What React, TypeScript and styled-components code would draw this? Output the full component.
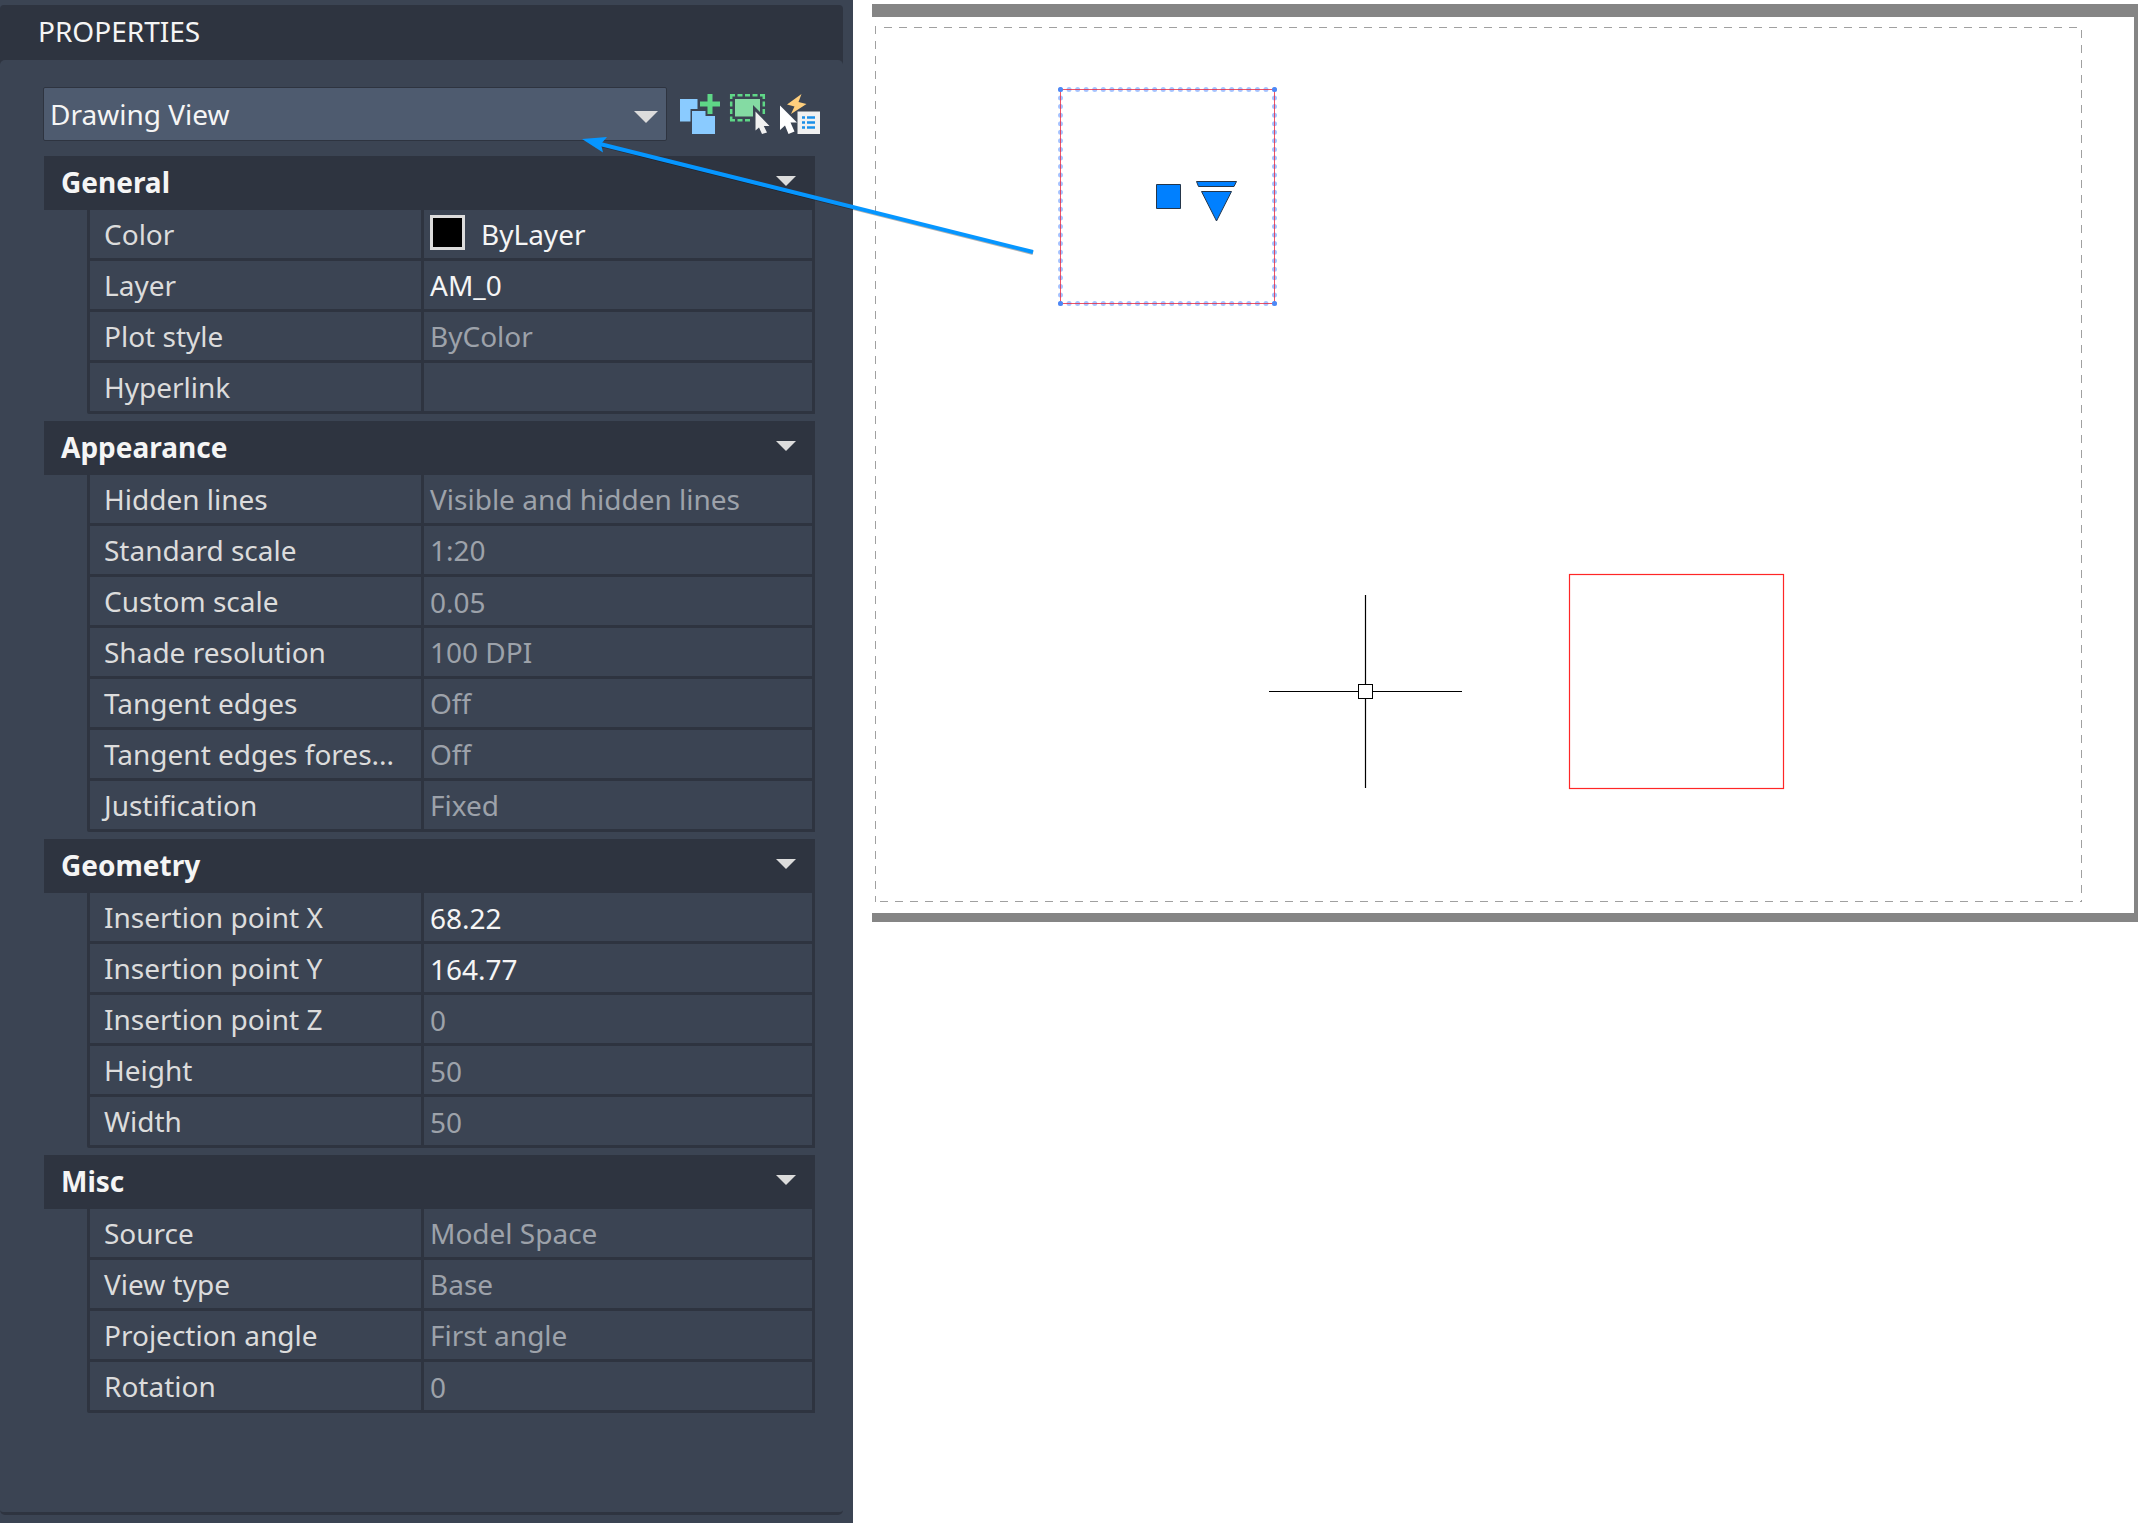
import React, { useId, useState } from "react";
import styled, { createGlobalStyle } from "styled-components";

const color = {
  panel: "#3b4453",
  dark: "#2e3440",
  field: "#4e5b6f",
  label: "#dcdcdc",
  text: "#f5f5f5",
  muted: "#9da2aa",
  accent: "#0696ff",
};

const GlobalStyle = createGlobalStyle`
  *, *::before, *::after { box-sizing: border-box; }
  body {
    margin: 0;
    background: #ffffff;
    font-family: "Noto Sans", "Open Sans", sans-serif;
    font-size: 28px;
    line-height: 38px;
  }
  button, input, select { font: inherit; color: inherit; }
`;

const Workspace = styled.div`
  position: relative;
  display: grid;
  grid-template-columns: 853px minmax(0, 1fr);
  min-height: 100vh;
`;

const Palette = styled.aside`
  display: flex;
  flex-direction: column;
  padding: 5px 10px 8px 0;
  background: ${color.panel};
  color: ${color.label};
`;

const TitleBar = styled.header`
  padding: 7px 38px 14px;
  margin-bottom: -4px;
  border-radius: 4px 4px 0 0;
  background: ${color.dark};
  color: ${color.text};
`;

const Title = styled.h1`
  margin: 0;
  font-size: 28px;
  line-height: 38px;
  font-weight: 400;
`;

const PaletteBody = styled.div`
  flex: 1;
  padding: 27px 23px 0 43px;
  border-bottom: 3px solid ${color.dark};
  border-radius: 5px;
  background: ${color.panel};
`;

const Toolbar = styled.div`
  display: flex;
  align-items: center;
  gap: 10px;
  margin-bottom: 15px;
`;

const SelectBox = styled.div`
  position: relative;
  flex: 1;
  margin-right: 3px;
`;

const ObjectSelect = styled.select`
  display: block;
  width: 100%;
  height: 54px;
  padding: 0 40px 0 6px;
  appearance: none;
  border: 1px solid ${color.dark};
  border-radius: 2px;
  background: ${color.field};
  color: ${color.text};
`;

const SelectArrow = styled.svg`
  position: absolute;
  top: 24px;
  right: 9px;
  pointer-events: none;
`;

const ToolButton = styled.button`
  display: block;
  width: 40px;
  height: 40px;
  padding: 0;
  border: 0;
  background: none;
  svg { display: block; overflow: visible; }
`;

const Groups = styled.div`
  display: flex;
  flex-direction: column;
  gap: 7px;
  margin: 0 5px 0 1px;
`;

const GroupHeading = styled.h2`
  margin: 0;
  font-size: 28px;
  line-height: 38px;
`;

const GroupToggle = styled.button`
  display: flex;
  align-items: center;
  justify-content: space-between;
  width: 100%;
  height: 54px;
  padding: 0 19px 2px 17px;
  border: 0;
  background: ${color.dark};
  color: ${color.text};
  font-weight: 700;
  text-align: left;
`;

const GroupArrow = styled.svg`
  margin-bottom: 2px;
`;

const PropertyTable = styled.table`
  width: calc(100% - 43px);
  margin-left: 43px;
  table-layout: fixed;
  border-collapse: separate;
  border-spacing: 0;
  border-left: 3px solid ${color.dark};
  border-radius: 0 0 2px 2px;
`;

const NameCell = styled.th`
  width: 334px;
  height: 51px;
  padding: 0 0 1px 14px;
  border-right: 3px solid ${color.dark};
  border-bottom: 3px solid ${color.dark};
  font-weight: 400;
  text-align: left;
  white-space: nowrap;
`;

const ValueCell = styled.td<{ $editable?: boolean; $numeric?: boolean }>`
  height: 51px;
  padding: ${(p) => (p.$numeric ? "2px 6px 0" : "0 6px 1px")};
  border-right: 3px solid ${color.dark};
  border-bottom: 3px solid ${color.dark};
  color: ${(p) => (p.$editable ? color.text : color.muted)};
  white-space: nowrap;
`;

const ValueInput = styled.input`
  display: block;
  width: 100%;
  height: 38px;
  padding: 0;
  border: 0;
  outline: 0;
  background: none;
`;

const ColorValue = styled.span`
  display: flex;
  align-items: center;
  gap: 16px;
`;

const Swatch = styled.span`
  width: 35px;
  height: 35px;
  margin-bottom: 2px;
  border: 3px solid ${color.label};
  background: #000000;
`;

const Canvas = styled.main`
  padding: 4px 0 0 19px;
`;

const Sheet = styled.div`
  overflow: hidden;
  border: solid #858585;
  border-width: 13px 4px 9px 0;
  background: #ffffff;
  svg { display: block; }
`;

const Callout = styled.svg`
  position: absolute;
  top: 126px;
  left: 572px;
  pointer-events: none;
`;

type Property = { name: string; value: string; kind?: "color" | "choice" | "number"; numeric?: boolean };
type Group = { title: string; properties: Property[] };

const groups: Group[] = [
  {
    title: "General",
    properties: [
      { name: "Color", value: "ByLayer", kind: "color" },
      { name: "Layer", value: "AM_0", kind: "choice" },
      { name: "Plot style", value: "ByColor" },
      { name: "Hyperlink", value: "" },
    ],
  },
  {
    title: "Appearance",
    properties: [
      { name: "Hidden lines", value: "Visible and hidden lines" },
      { name: "Standard scale", value: "1:20" },
      { name: "Custom scale", value: "0.05", numeric: true },
      { name: "Shade resolution", value: "100 DPI" },
      { name: "Tangent edges", value: "Off" },
      { name: "Tangent edges fores...", value: "Off" },
      { name: "Justification", value: "Fixed" },
    ],
  },
  {
    title: "Geometry",
    properties: [
      { name: "Insertion point X", value: "68.22", kind: "number", numeric: true },
      { name: "Insertion point Y", value: "164.77", kind: "number", numeric: true },
      { name: "Insertion point Z", value: "0", numeric: true },
      { name: "Height", value: "50", numeric: true },
      { name: "Width", value: "50", numeric: true },
    ],
  },
  {
    title: "Misc",
    properties: [
      { name: "Source", value: "Model Space" },
      { name: "View type", value: "Base" },
      { name: "Projection angle", value: "First angle" },
      { name: "Rotation", value: "0", numeric: true },
    ],
  },
];

function PickAddIcon() {
  return (
    <svg width="40" height="40" viewBox="0 0 40 40" aria-hidden="true">
      <path d="M0 5H17.5V15H10.5V27.5H0Z" fill="#8acbff" />
      <path d="M12 17H25.5V22H35V40H12Z" fill="#8acbff" />
      <path d="M27.5 0H32.5V7.5H40V12.5H32.5V20H27.5V12.5H20V7.5H27.5Z" fill="#5fd787" />
    </svg>
  );
}

function SelectObjectsIcon() {
  return (
    <svg width="40" height="40" viewBox="0 0 40 40" aria-hidden="true">
      <path d="M5 5H30V22.5H5Z" fill="#84dba3" />
      <path
        d="M1.2 5V1.2H5M7.5 1.2H12.5M15 1.2H20M22.5 1.2H27.5M30 1.2H33.8V5M33.8 7.5V12.5M33.8 15V20M1.2 7.5V12.5M1.2 15V20M1.2 22.5V26.3H5M7.5 26.3H12.5M15 26.3H20"
        fill="none"
        stroke="#5fd787"
        strokeWidth="2.5"
      />
      <path d="M23 11L35 23L25.5 34H23Z" fill={color.panel} />
      <path d="M25.5 17.5L39.5 32H33.8L37 38.5L32 40L29 33.5L25.5 36.5Z" fill="#f0f0f0" />
    </svg>
  );
}

function QuickSelectIcon() {
  return (
    <svg width="40" height="40" viewBox="0 0 40 40" aria-hidden="true">
      <path d="M21.5 0L7 10.5L14.5 12.5L11 20L26.5 10L18.5 8Z" fill="#ffcf7d" />
      <path d="M0 11.5L17 28.5H10.5L14.5 37.5L8.5 40L5 31.5L0 36Z" fill="#ffffff" />
      <path d="M17.5 17.5H40V40H17.5Z" fill="#f0f0f0" />
      <path
        d="M22 23.5H25M27 23.5H35M22 28.5H25M27 28.5H35M22 33.5H25M27 33.5H35"
        stroke="#1a8fe8"
        strokeWidth="2.6"
      />
    </svg>
  );
}

function PropertyRow({ name, value, kind, numeric }: Property) {
  const id = useId();
  const [current, setCurrent] = useState(value);
  return (
    <tr>
      <NameCell scope="row">{kind === "number" ? <label htmlFor={id}>{name}</label> : name}</NameCell>
      <ValueCell $editable={Boolean(kind)} $numeric={numeric}>
        {kind === "number" ? (
          <ValueInput id={id} type="text" value={current} onChange={(e) => setCurrent(e.target.value)} />
        ) : kind === "color" ? (
          <ColorValue>
            <Swatch />
            {value}
          </ColorValue>
        ) : (
          value
        )}
      </ValueCell>
    </tr>
  );
}

function PropertyGroup({ title, properties }: Group) {
  const [open, setOpen] = useState(true);
  return (
    <section>
      <GroupHeading>
        <GroupToggle type="button" aria-expanded={open} onClick={() => setOpen(!open)}>
          {title}
          <GroupArrow width="20" height="10" viewBox="0 0 20 10" aria-hidden="true">
            <path d="M0 0H20L10 10Z" fill="#dcdcdc" />
          </GroupArrow>
        </GroupToggle>
      </GroupHeading>
      {open && (
        <PropertyTable aria-label={title}>
          <tbody>
            {properties.map((p) => (
              <PropertyRow key={p.name} {...p} />
            ))}
          </tbody>
        </PropertyTable>
      )}
    </section>
  );
}

function SheetDrawing() {
  return (
    <svg width="1262" height="896" viewBox="872 17 1262 896" aria-label="Layout sheet">
      <g fill="none" stroke="#a0a0a0" strokeWidth="1" strokeDasharray="8 7">
        <path d="M884 27.5H2078M880 901.5H2082" />
        <path d="M875.5 26V902M2081.5 30V902" />
      </g>
      <g fill="none">
        <rect
          x="1060.5"
          y="89.5"
          width="214"
          height="214"
          stroke="#5f94ff"
          strokeOpacity="0.55"
          strokeWidth="5"
          strokeLinecap="round"
          strokeDasharray="0 8.56"
        />
        <rect x="1060.5" y="89.5" width="214" height="214" stroke="#e8283f" strokeOpacity="0.8" strokeWidth="1" />
      </g>
      <g fill="#4d88f5">
        <circle cx="1060.5" cy="89.5" r="2.5" />
        <circle cx="1274.5" cy="89.5" r="2.5" />
        <circle cx="1060.5" cy="303.5" r="2.5" />
        <circle cx="1274.5" cy="303.5" r="2.5" />
      </g>
      <g fill="#0080ff" stroke="#25364a" strokeWidth="1">
        <path d="M1156.5 184.5H1180.5V208.5H1156.5Z" />
        <path d="M1196.5 181.5H1236.5L1234 186.5H1198.5Z" />
        <path d="M1201.5 191.5H1231.5L1216.5 221Z" />
      </g>
      <g fill="none" stroke="#000000" strokeWidth="1">
        <path d="M1365.5 595V684M1365.5 698V788M1269 691.5H1358M1372 691.5H1462" strokeWidth="1.2" />
        <rect x="1358.5" y="684.5" width="14" height="14" />
      </g>
      <rect x="1569.5" y="574.5" width="214" height="214" fill="none" stroke="#ff2626" strokeWidth="1.2" />
    </svg>
  );
}

export default function App() {
  return (
    <>
      <GlobalStyle />
      <Workspace>
        <Palette>
          <TitleBar>
            <Title>PROPERTIES</Title>
          </TitleBar>
          <PaletteBody>
            <Toolbar>
              <SelectBox>
                <ObjectSelect aria-label="Selected object type" defaultValue="view">
                  <option value="view">Drawing View</option>
                </ObjectSelect>
                <SelectArrow width="24" height="12" viewBox="0 0 24 12" aria-hidden="true">
                  <path d="M0 0H24L12 12Z" fill="#dcdcdc" />
                </SelectArrow>
              </SelectBox>
              <ToolButton type="button" aria-label="Toggle pick add">
                <PickAddIcon />
              </ToolButton>
              <ToolButton type="button" aria-label="Select objects">
                <SelectObjectsIcon />
              </ToolButton>
              <ToolButton type="button" aria-label="Quick select">
                <QuickSelectIcon />
              </ToolButton>
            </Toolbar>
            <Groups>
              {groups.map((g) => (
                <PropertyGroup key={g.title} {...g} />
              ))}
            </Groups>
          </PaletteBody>
        </Palette>
        <Canvas>
          <Sheet>
            <SheetDrawing />
          </Sheet>
        </Canvas>
        <Callout width="470" height="136" viewBox="572 126 470 136" aria-hidden="true">
          <path d="M601 145L1033 253" stroke="#000000" strokeOpacity="0.3" strokeWidth="4" />
          <path d="M600 144L1033 252" stroke={color.accent} strokeWidth="4" />
          <path d="M582 139L607 137L601 144L603 152.500Z" fill={color.accent} />
        </Callout>
      </Workspace>
    </>
  );
}
